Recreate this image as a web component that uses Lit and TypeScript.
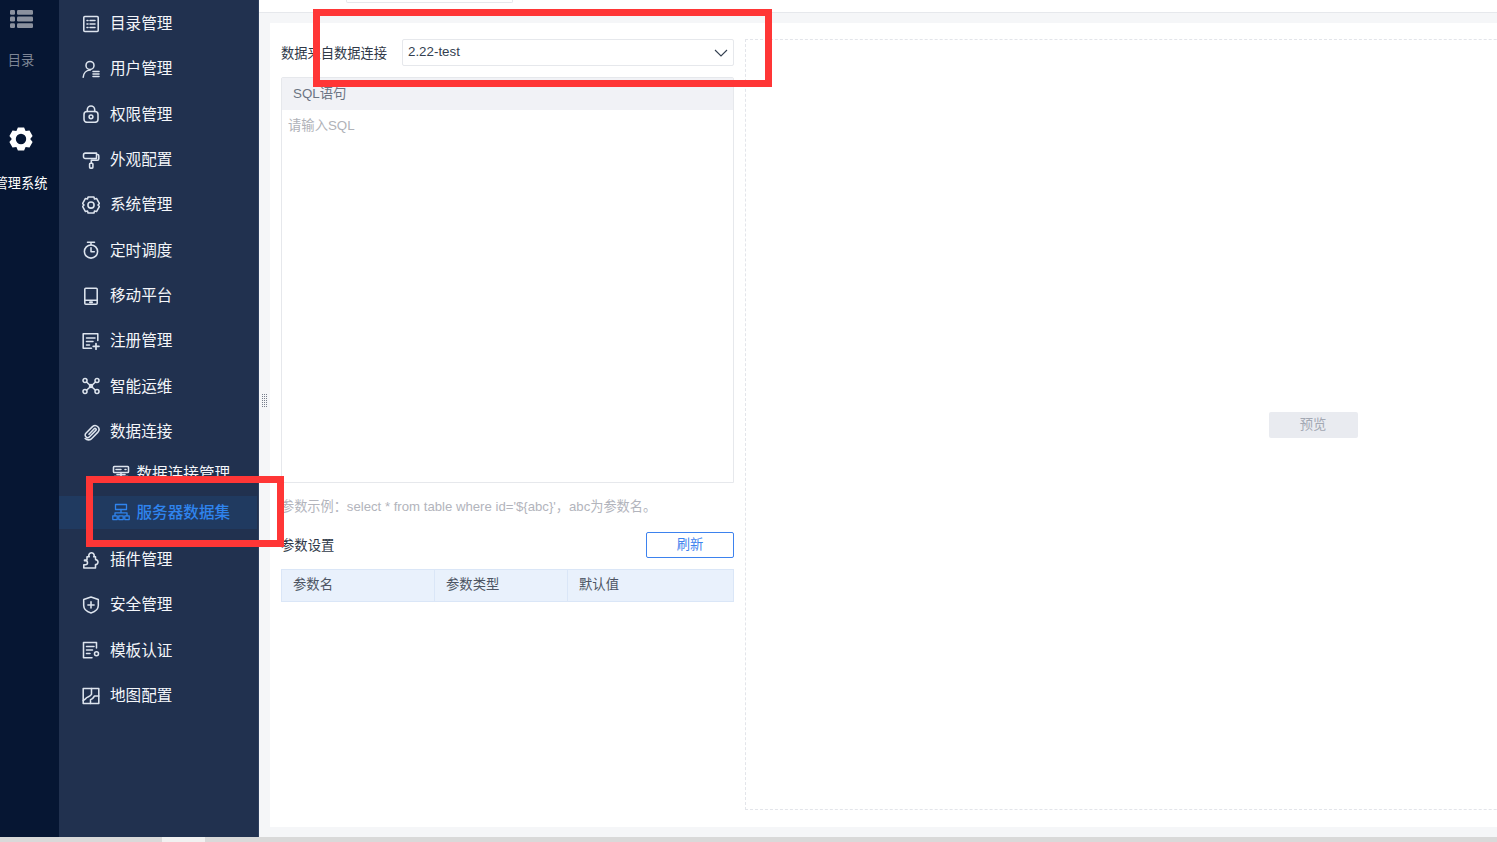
import { LitElement, html, css, svg } from "lit";
import { customElement } from "lit/decorators.js";

/* Six-lobed gear outline, lobes pointing up and down. */
const gearPath = (cx: number, cy: number, outer: number, inner: number, half: number) => {
  const pts: string[] = [];
  for (let k = 0; k < 6; k++) {
    const a = -90 + k * 60;
    for (const [d, r] of [[-half, outer], [half, outer], [30, inner]] as [number, number][]) {
      const t = ((a + d) * Math.PI) / 180;
      pts.push(`${(cx + r * Math.cos(t)).toFixed(2)} ${(cy + r * Math.sin(t)).toFixed(2)}`);
    }
  }
  return `M${pts.join("L")}Z`;
};

const icons: Record<string, unknown> = {
  catalog: svg`<rect x="1.800" y="1.500" width="14.400" height="15" rx="1"/><path d="M5 5.500h1M8 5.500h5M5 9h1M8 9h5M5 12.500h1M8 12.500h5"/>`,
  user: svg`<circle cx="8" cy="5.400" r="4"/><path d="M1.200 17.200c.3-4 3-6.900 6.900-7.100M11 11.500h6M11 14h6M11 16.500h6"/>`,
  lock: svg`<rect x="2" y="6.500" width="14" height="10.800" rx="3"/><path d="M5.300 6.500V4.700a3.700 3.700 0 0 1 7.400 0v1.800"/><circle cx="9" cy="11.800" r="1.900"/>`,
  paint: svg`<path d="M1.500 3.900A1.800 1.800 0 0 1 3.300 2.100h11.200v5.400H3.300A1.800 1.800 0 0 1 1.500 5.700zM14.500 3.500h1a1.300 1.300 0 0 1 1.300 1.300v3a1.500 1.500 0 0 1-1.500 1.500H9.300v2.800"/><rect x="7.600" y="12.300" width="3.300" height="4.800" rx=".8"/>`,
  gear: svg`<path d=${gearPath(9, 9, 8.6, 7, 20)}/><circle cx="9" cy="9" r="3.100"/>`,
  timer: svg`<circle cx="9" cy="10.500" r="6.600"/><path d="M5.500 1.300h7M9 1.300v2.500M9 6.800v3.900h3.300"/>`,
  mobile: svg`<rect x="2.800" y="1.200" width="12.400" height="16" rx="1"/><path d="M2.800 13.300h12.400"/><path d="M8 15.300h2" stroke-width="2"/>`,
  register: svg`<path d="M15.800 8.500V1.800H1.200v14.400h8.300M4.500 6h8.500M4.500 9.500h6.500M4.500 13h3"/><path d="M14 11.500v5.800M11.200 14.300h5.800" stroke-width="1.700"/>`,
  ops: svg`<circle cx="3" cy="3.500" r="2"/><circle cx="15" cy="3.500" r="2"/><circle cx="3" cy="14.500" r="2"/><circle cx="15" cy="14.500" r="2"/><path d="M4.500 5l9 8.200M13.500 5l-9 8.200"/><circle cx="9" cy="9" r="1.500"/>`,
  clip: svg`<path d="M7 11.200L12.200 5.800a1.100 1.100 0 0 1 1.600 1.600L7.500 13.800a2.500 2.500 0 0 1-3.600-3.600L10.500 3.600a3.900 3.900 0 0 1 5.500 5.500L10 15.200a4.600 4.600 0 0 1-6.800.3"/>`,
  conn: svg`<rect x="1.500" y="1.500" width="15" height="6" rx=".8"/><path d="M4 4.500h5M13 4.500h1"/><path d="M5 9.500h8M9 7.500v4"/><rect x="1.500" y="11.500" width="15" height="5" rx=".8"/>`,
  dataset: svg`<rect x="3.500" y="1.500" width="11" height="5"/><path d="M9 6.500v3.300M3 12.800V9.800h12v3"/><rect x=".8" y="12.800" width="4.400" height="3.800"/><rect x="6.800" y="12.800" width="4.400" height="3.800"/><rect x="12.800" y="12.800" width="4.400" height="3.800"/>`,
  plugin: svg`<path d="M5 5.800h2.300a2.600 2.600 0 1 1 4.400 0h1.800v2.800a2.500 2.500 0 1 1 0 5v3.400H1.800v-3.200h1.700a2 2 0 1 0 0-4H2.500V9H5z"/>`,
  shield: svg`<path d="M9 1.100l7.300 2.500v5.900c0 3.500-3.200 6.200-7.300 7.500-4.100-1.300-7.300-4-7.300-7.500V3.600z"/><path d="M9 5.800v6.200M5.900 8.900h6.200"/>`,
  cert: svg`<path d="M14.500 7V1.500H1.500v15.200h8.500M4.500 5.500h7.500M4.500 9h6M4.500 12.500h3.500"/><circle cx="14.500" cy="12.800" r="2"/>`,
  map: svg`<rect x="1.200" y="1.500" width="15.600" height="15"/><path d="M9.500 1.500v5.800c-1 2.700-4.800 2-6 4.500l-2.300 1.800M8.500 16.500v-3.700c2-.5 3-2 4-3.800h4.300"/>`,
};

const icon = (n: string) => html`<svg class="ico" viewBox="0 0 18 18">${icons[n]}</svg>`;

type Item = { t: string; i: string };
const top: Item[] = [
  { t: "目录管理", i: "catalog" }, { t: "用户管理", i: "user" }, { t: "权限管理", i: "lock" },
  { t: "外观配置", i: "paint" }, { t: "系统管理", i: "gear" }, { t: "定时调度", i: "timer" },
  { t: "移动平台", i: "mobile" }, { t: "注册管理", i: "register" }, { t: "智能运维", i: "ops" },
  { t: "数据连接", i: "clip" },
];
const bottom: Item[] = [
  { t: "插件管理", i: "plugin" }, { t: "安全管理", i: "shield" },
  { t: "模板认证", i: "cert" }, { t: "地图配置", i: "map" },
];

@customElement("app-root")
export class AppRoot extends LitElement {
  static styles = css`
    :host {
      display: grid;
      grid-template-rows: 837px 5px;
      width: 100%;
      height: 100vh;
      overflow: hidden;
      position: relative;
      font-family: "Liberation Sans", "Noto Sans CJK SC", sans-serif;
      font-size: 13.33px;
      color: #333a47;
      background: #f5f6f8;
    }
    .app { display: flex; min-height: 0; }
    .rail {
      flex: 0 0 59px;
      background: #061633;
      display: flex;
      flex-direction: column;
      overflow: hidden;
    }
    .rail-item {
      width: 42px;
      display: flex;
      flex-direction: column;
      align-items: center;
      white-space: nowrap;
      font-size: 13.2px;
      line-height: 18px;
    }
    .rail-item.dim { color: #7d8595; padding-top: 10px; gap: 24px; height: 100px; box-sizing: border-box; }
    .rail-item.on { color: #fff; padding-top: 27px; gap: 24px; }
    .rail-item .lab { flex: none; }
    .rail-ico { display: block; flex: none; }
    .side {
      flex: 0 0 200px;
      background: #21314f;
      color: #f4f6fa;
      font-size: 15.6px;
      overflow: hidden;
      border-right: 1px solid #2e3f5e;
      box-sizing: border-box;
    }
    .item {
      height: 45.33px;
      box-sizing: border-box;
      padding: 0 0 1px 23px;
      display: flex;
      align-items: center;
      gap: 10px;
      white-space: nowrap;
    }
    .ico {
      width: 18px;
      height: 18px;
      flex: none;
      margin-top: 3px;
      fill: none;
      stroke: currentColor;
      stroke-width: 1.550;
      stroke-linejoin: round;
      stroke-linecap: round;
    }
    .item .ico { color: #dde4ee; }
    .sub {
      height: 33px;
      display: flex;
      align-items: center;
      gap: 7px;
      padding-left: 52.500px;
      white-space: nowrap;
    }
    .sub .ico { color: #dde4ee; }
    .sub.first { margin-top: 2.500px; margin-bottom: 7px; }
    .sub.active {
      background: #203a60;
      color: #2f84ee;
      font-weight: 500;
      margin-right: 1px;
      margin-bottom: 7.200px;
      padding-bottom: 3px;
      box-sizing: border-box;
    }
    .sub.active .ico { color: #2f84ee; stroke-width: 1.300; }
    .main { flex: 1; min-width: 0; display: flex; flex-direction: column; position: relative; }
    .topbar {
      flex: 0 0 13px;
      box-sizing: border-box;
      background: #fff;
      border-bottom: 1px solid #e6e8ec;
      padding-left: 87px;
    }
    .topbar-input {
      width: 167px;
      height: 3px;
      box-sizing: border-box;
      border: 1px solid #e6e8ec;
      border-top: 0;
      border-radius: 0 0 2px 2px;
    }
    .grip {
      position: absolute;
      left: 2px;
      top: 394px;
      width: 6px;
      height: 14px;
      background: conic-gradient(#767d8b 25%, transparent 0) 0 0 / 2px 2px;
    }
    .content { flex: 1; min-height: 0; padding: 10px 0 10px 11px; display: flex; }
    .card {
      flex: 1;
      min-width: 0;
      background: #fff;
      overflow: hidden;
      box-sizing: border-box;
      padding: 16px 0 17px 11px;
      display: flex;
      gap: 11px;
    }
    .left { flex: 0 0 453px; display: flex; flex-direction: column; }
    .source { display: flex; align-items: center; height: 27px; }
    .source label { flex: 0 0 121px; color: #2f3847; font-size: 13.25px; white-space: nowrap; }
    .select {
      flex: 1;
      height: 27px;
      box-sizing: border-box;
      border: 1px solid #e6e8ec;
      border-radius: 2px;
      display: flex;
      align-items: center;
      justify-content: space-between;
      padding: 0 5px;
      color: #333f50;
      line-height: 22px;
    }
    .select span { margin-top: -2px; }
    .select svg { width: 14px; height: 8px; fill: none; stroke: #333f50; stroke-width: 1.100; }
    .sql {
      margin-top: 11px;
      height: 406px;
      box-sizing: border-box;
      border: 1px solid #e6e8ec;
      border-radius: 2px 2px 0 0;
    }
    .sql-head {
      height: 32px;
      background: #f1f2f6;
      color: #6b7483;
      padding-left: 11px;
      line-height: 32px;
    }
    .sql-body { color: #b0b2b8; padding: 7px 6px; line-height: 18px; }
    .hint { height: 49px; padding-bottom: 4px; box-sizing: border-box; display: flex; align-items: center; color: #b2b4bc; font-size: 13.18px; white-space: nowrap; }
    .params { display: flex; align-items: center; justify-content: space-between; height: 26px; }
    .params b { font-weight: 400; color: #2f3847; margin-top: -2px; }
    .refresh {
      width: 88px;
      height: 26px;
      box-sizing: border-box;
      border: 1px solid #3d82ee;
      border-radius: 2px;
      color: #3d82ee;
      text-align: center;
      line-height: 23px;
    }
    .table {
      margin-top: 11px;
      height: 33px;
      box-sizing: border-box;
      display: grid;
      grid-template-columns: 152px 133px 1fr;
      background: #e9f1fc;
      border: 1px solid #dae6f7;
      color: #4d5563;
    }
    .table div { padding-left: 11px; line-height: 30px; border-left: 1px solid #dae6f7; }
    .table div:first-child { border-left: 0; }
    .right {
      flex: 0 0 1136px;
      box-sizing: border-box;
      border: 1px dashed #e3e5ea;
      display: flex;
      align-items: center;
      justify-content: center;
    }
    .preview {
      width: 89px;
      height: 26px;
      background: #e9ebf0;
      border-radius: 2px;
      color: #a3a8b3;
      text-align: center;
      line-height: 25px;
    }
    .hbar { background: #d9d9d9; padding-left: 162px; }
    .thumb { width: 43px; height: 5px; background: #f1f1f1; }
    .mark { position: absolute; border: 7px solid #ff3636; box-sizing: border-box; pointer-events: none; }
    .mark.a { left: 313px; top: 9px; width: 459px; height: 78px; }
    .mark.b { left: 86px; top: 476px; width: 198px; height: 71px; }
  `;

  render() {
    const row = (m: Item) => html`<div class="item">${icon(m.i)}<span>${m.t}</span></div>`;
    return html`
      <div class="app">
        <nav class="rail">
          <div class="rail-item dim">
            <svg class="rail-ico" width="23" height="18" viewBox="0 0 23 18" fill="#8b919e">
              <rect x="0" y="0" width="5" height="4.800" rx="1.200"/><rect x="7" y="0" width="16" height="4.800" rx="1.200"/>
              <rect x="0" y="6.600" width="5" height="4.800" rx="1.200"/><rect x="7" y="6.600" width="16" height="4.800" rx="1.200"/>
              <rect x="0" y="13.200" width="5" height="4.800" rx="1.200"/><rect x="7" y="13.200" width="16" height="4.800" rx="1.200"/>
            </svg>
            <span class="lab">目录</span>
          </div>
          <div class="rail-item on">
            <svg class="rail-ico" width="24" height="24" viewBox="0 0 24 24" fill="#fff">
              <path fill-rule="evenodd" d="${gearPath(12, 12, 12, 9.2, 15)}M12 6.800a5.200 5.200 0 1 0 0 10.400 5.200 5.200 0 0 0 0-10.400z"/>
            </svg>
            <span class="lab">管理系统</span>
          </div>
        </nav>
        <aside class="side">
          ${top.map(row)}
          <div class="sub first">${icon("conn")}<span>数据连接管理</span></div>
          <div class="sub active">${icon("dataset")}<span>服务器数据集</span></div>
          ${bottom.map(row)}
        </aside>
        <main class="main">
          <div class="topbar"><div class="topbar-input"></div></div>
          <div class="grip"></div>
          <div class="content">
            <section class="card">
              <div class="left">
                <div class="source">
                  <label>数据来自数据连接</label>
                  <div class="select">
                    <span>2.22-test</span>
                    <svg viewBox="0 0 14 8"><path d="M1 1l6 6 6-6"/></svg>
                  </div>
                </div>
                <div class="sql">
                  <div class="sql-head">SQL语句</div>
                  <div class="sql-body">请输入SQL</div>
                </div>
                <div class="hint">参数示例：select * from table where id='\${abc}'，abc为参数名。</div>
                <div class="params"><b>参数设置</b><div class="refresh">刷新</div></div>
                <div class="table"><div>参数名</div><div>参数类型</div><div>默认值</div></div>
              </div>
              <div class="right"><div class="preview">预览</div></div>
            </section>
          </div>
        </main>
      </div>
      <div class="hbar"><div class="thumb"></div></div>
      <div class="mark a"></div>
      <div class="mark b"></div>
    `;
  }
}
